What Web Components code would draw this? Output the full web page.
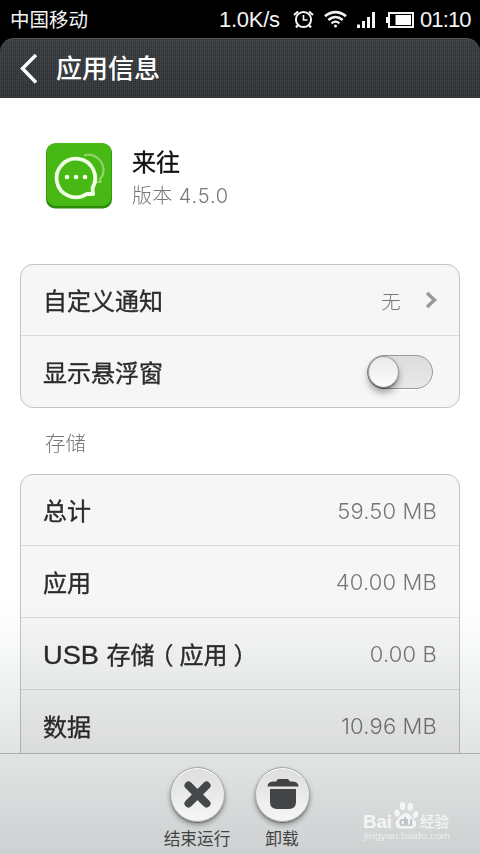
<!DOCTYPE html>
<html lang="zh-CN">
<head>
<meta charset="utf-8">
<title>应用信息</title>
<style>
html,body{margin:0;height:100%;overflow:hidden;background:#000}
body{font-family:"Inter","Noto Sans CJK SC",sans-serif}
</style>
</head>
<body>
<app-screen></app-screen>
<script>
const define = (name, html) => customElements.define(name, class extends HTMLElement {
  constructor() {
    super();
    const t = document.createElement('template');
    t.innerHTML = html;
    this.attachShadow({mode: 'open'}).append(t.content.cloneNode(true));
  }
});

define('status-bar', `<style>
:host{display:flex;height:38px;flex:none;background:#000;color:#f4f4f4;align-items:center;padding:0 10px;box-sizing:border-box;white-space:nowrap}
.c{font:400 19.5px/38px "Noto Sans CJK SC",sans-serif;flex:1}
.t{font:300 22px/38px "Liberation Sans",sans-serif;padding-top:2px}
svg{display:block;flex:none}
</style>
<span class="c">中国移动</span><span class="t" style="margin-right:12px;width:61px;letter-spacing:-.25px">1.0K/s</span>
<svg width="128" height="38" viewBox="292 0 128 38" fill="none" stroke="#f4f4f4">
<circle cx="303.500" cy="19.500" r="7.600" stroke-width="2"/><path d="M303.500 15v5h4" stroke-width="1.700"/><path d="M294 15l4-3.500M313 15l-4-3.500M298 25l-2 2.500M309 25l2 2.500" stroke-width="2.200"/>
<path d="M325 16.200Q335.500 8 346 16.200" stroke-width="2.800"/><path d="M328.300 20Q335.500 14 342.700 20" stroke-width="2.500"/><path d="M331.500 23.300Q335.500 20 339.500 23.300" stroke-width="2.200"/><circle cx="335.500" cy="26" r="1.500" fill="#f4f4f4" stroke="none"/>
<path d="M358.500 28v-3.500M363.500 28v-7M368.500 28v-11M373.500 28v-16" stroke-width="3"/>
<path d="M389 13h24v14h-24z" stroke-width="2"/><path d="M395.500 15h15.500v10H395.500zM386 17h2v6h-2z" fill="#fff" stroke="none"/>
</svg><span class="t" style="width:50px;letter-spacing:-.9px">01:10</span>`);

define('title-bar', `<style>
:host{display:flex;height:60px;flex:none;box-sizing:border-box;border-radius:14px 14px 0 0;border-top:1px solid #55585a;color:#fff;align-items:center;padding-left:20px;
background:repeating-linear-gradient(0deg,#0002 0 1px,transparent 1px 2px),repeating-linear-gradient(90deg,#fff1 0 1px,transparent 1px 2px),linear-gradient(#3b3e41,#313438)}
svg{display:block;width:20px;height:32px;margin-right:16px}
h1{margin:0;font:500 26px/60px "Noto Sans CJK SC",sans-serif;padding-bottom:3px}
</style><svg viewBox="0 0 20 32" fill="none" stroke="#fff" stroke-width="3.400"><path d="M16 2L2.500 15.500 16 29.500"/></svg><h1><slot></slot></h1>`);

define('app-header', `<style>
:host{display:flex;padding:45px 0 0 46px;height:166px;box-sizing:border-box}
svg{display:block;width:66px;height:66px;margin-right:20px}
.n{font:400 24px/36px "Noto Sans CJK SC",sans-serif;color:#111;-webkit-text-stroke:.35px #111}
.v{font-weight:300;font-size:20px;line-height:32px;color:#777;white-space:nowrap;letter-spacing:.2px;padding-top:1px}
</style>
<svg viewBox="0 0 66 66"><rect y=".5" width="66" height="65" rx="9" fill="#2b8c0b"/><rect x=".6" y="0" width="64.800" height="63" rx="9" fill="#48b814"/>
<path d="M38 12.500Q45 10 51 14.500Q58 20 57.500 28Q57 33 54 36L54.500 39H49" fill="none" stroke="#8fd56e" stroke-width="2.200"/>
<path d="M46.500 51H40A19.300 19.300 0 1 1 46 44.500Q45.600 48.500 46.500 51Z" transform="translate(.7 0)" fill="#48b814" stroke="#f1ffe5" stroke-width="3.800" stroke-linejoin="round"/>
<g fill="#f1ffe5"><circle cx="21" cy="34" r="2.300"/><circle cx="30" cy="34" r="2.300"/><circle cx="39" cy="34" r="2.300"/></g></svg>
<div><div class="n"><slot name="name"></slot></div><div class="v"><slot></slot></div></div>`);

define('list-card', `<style>
:host{display:block;margin:0 20px;box-sizing:border-box;border:1px solid #c4c4c4;border-radius:13px;background:#f6f6f6;overflow:hidden}
:host([continues]){padding-bottom:40px}
::slotted(list-row:not(:first-child)){border-top:1px solid #dadada}
::slotted(list-row:first-child){height:70px}
</style><slot></slot>`);

define('list-row', `<style>
:host{display:flex;height:71px;align-items:center;justify-content:space-between;padding:0 22px 0 22px;color:#2b2b2b;white-space:nowrap}
.l{font-size:24px;font-weight:400;-webkit-text-stroke:.35px #2b2b2b;line-height:70px;height:70px;font-family:"Noto Sans CJK SC",sans-serif}
.r{display:flex;align-items:center;font-size:22px;font-weight:300;color:#777;letter-spacing:.15px;padding-top:1px}
</style><span class="l"><slot></slot></span><span class="r"><slot name="value"></slot></span>`);

define('chevron-icon', `<style>:host{display:block;margin:-1px -1px 0 23px}svg{display:block}</style>
<svg width="14" height="18" fill="none" stroke="#999" stroke-width="3.500"><path d="M3 2l7.500 7L3 16"/></svg>`);

define('toggle-switch', `<style>
:host{display:flex;width:66px;height:34px;box-sizing:border-box;border:1px solid #999;border-radius:17px;background:linear-gradient(#dcdcdc,#e9e9e9);margin:-1px 4px 0 0;box-shadow:0 1px #fff}
i{display:block;box-sizing:border-box;width:31px;height:32px;border-radius:50%;border:1px solid #999;border-bottom-color:#777;background:linear-gradient(#e9e9e9,#fdfdfd);box-shadow:0 5px 7px #0005,0 1px 1px #0006}
</style><i></i>`);

define('round-action', `<style>
:host{display:flex;flex-direction:column;align-items:center;width:85px;white-space:nowrap}
.b{width:55px;height:55px;box-sizing:border-box;border:1px solid #a5a7a7;border-radius:50%;background:linear-gradient(#dcdddd,#f6f6f6);box-shadow:0 3px 5px #0005,0 1px 1px #0005,inset 0 1px #fff}
.t{font:400 16.700px/24px "Noto Sans CJK SC",sans-serif;color:#444;margin-top:4px;margin-left:-1px}
::slotted(svg){display:block;margin:-1px}
</style><div class="b"><slot name="icon"></slot></div><div class="t"><slot></slot></div>`);

define('water-mark', `<style>
:host{display:block;position:absolute;left:360px;top:45px}
svg{display:block}text{fill:#f4f6f6}
</style><svg width="100" height="44">
<g fill="#f4f6f6"><ellipse cx="37" cy="14" rx="2.700" ry="3.700" transform="rotate(-15 37 14)"/><ellipse cx="42.500" cy="7" rx="2.700" ry="4.200"/><ellipse cx="50.300" cy="7.800" rx="2.700" ry="4"/><ellipse cx="55.500" cy="15.500" rx="2.600" ry="3.600" transform="rotate(18 55.500 15.500)"/>
<path d="M46 14c4 0 5 4 8.500 7 3.500 4 1 8.500-3 8.500H40c-4 0-6-4.500-3-8.500 3-3 5-7 9-7z"/></g>
<text x="3" y="28.500" font-family="Liberation Sans" font-weight="700" font-size="19" textLength="29" lengthAdjust="spacingAndGlyphs">Bai</text>
<text x="39" y="27" font-family="Liberation Sans" font-weight="700" font-size="12.500" textLength="14" style="fill:#b9bfbf">du</text>
<text x="60" y="27.500" font-family="Noto Sans CJK SC" font-weight="500" font-size="15" textLength="29" lengthAdjust="spacingAndGlyphs">经验</text>
<text x="4" y="40" font-family="Liberation Sans" font-size="9.500" textLength="86" lengthAdjust="spacingAndGlyphs" style="fill:#eceeee">jingyan.baidu.com</text></svg>`);

define('action-bar', `<style>
:host{display:flex;position:relative;height:101px;flex:none;box-sizing:border-box;border-top:1px solid #a8abab;padding:13px 0 0 155px;background:linear-gradient(#e2e4e4,#cdd1d1)}
</style><slot></slot>`);

define('app-screen', `<style>
:host{display:flex;flex-direction:column;width:480px;height:854px;overflow:hidden;background:#000}
main{flex:1;min-height:0;overflow:hidden;position:relative;background:#fff;isolation:isolate}
h2{margin:0;padding-left:45px;height:66px;font:300 20.500px/69px "Noto Sans CJK SC",sans-serif;color:#777}
.fade{position:absolute;left:0;right:0;bottom:0;height:155px;pointer-events:none;mix-blend-mode:multiply;background:linear-gradient(#fff,#f8f9f9 30%,#ecefee 65%,#e2e4e3)}
.usb{font-family:"Liberation Sans";font-size:25px;display:inline-block;width:58px;transform-origin:0 50%;transform:scaleX(1.090);-webkit-text-stroke-width:.3px;line-height:30px}
.open{margin:0 6px 0 -5px}
.close{margin-left:6px}
</style>
<status-bar></status-bar><title-bar>应用信息</title-bar>
<main>
<app-header><span slot="name">来往</span>版本 <span style="letter-spacing:.85px;margin-left:.5px">4.5.0</span></app-header>
<list-card><list-row>自定义通知<span slot="value" style="font-size:19.500px">无</span><chevron-icon slot="value"></chevron-icon></list-row>
<list-row>显示悬浮窗<toggle-switch slot="value"></toggle-switch></list-row></list-card>
<h2>存储</h2>
<list-card continues><list-row>总计<span slot="value">59.50 MB</span></list-row><list-row>应用<span slot="value">40.00 MB</span></list-row><list-row><span class="usb">USB</span> 存储<span class="open">（</span>应用<span class="close">）</span><span slot="value">0.00 B</span></list-row><list-row>数据<span slot="value">10.96 MB</span></list-row></list-card>
<div class="fade"></div>
</main>
<action-bar>
<round-action><svg slot="icon" width="55" height="55"><path d="M18.500 18.500l18 18M36.500 18.500l-18 18" stroke="#45484a" stroke-width="8" stroke-linecap="round"/></svg>结束运行</round-action>
<round-action><svg slot="icon" width="55" height="55" fill="#424446"><path d="M12.500 19.500Q12.500 15 18 14.500H21L23 12H33L35 14.500H38Q43.500 15 43.500 19.500Z"/><path d="M15 22H41V35Q41 42 34 42H22Q15 42 15 35Z"/></svg>卸载</round-action>
<water-mark></water-mark></action-bar>`);
</script>
</body>
</html>
